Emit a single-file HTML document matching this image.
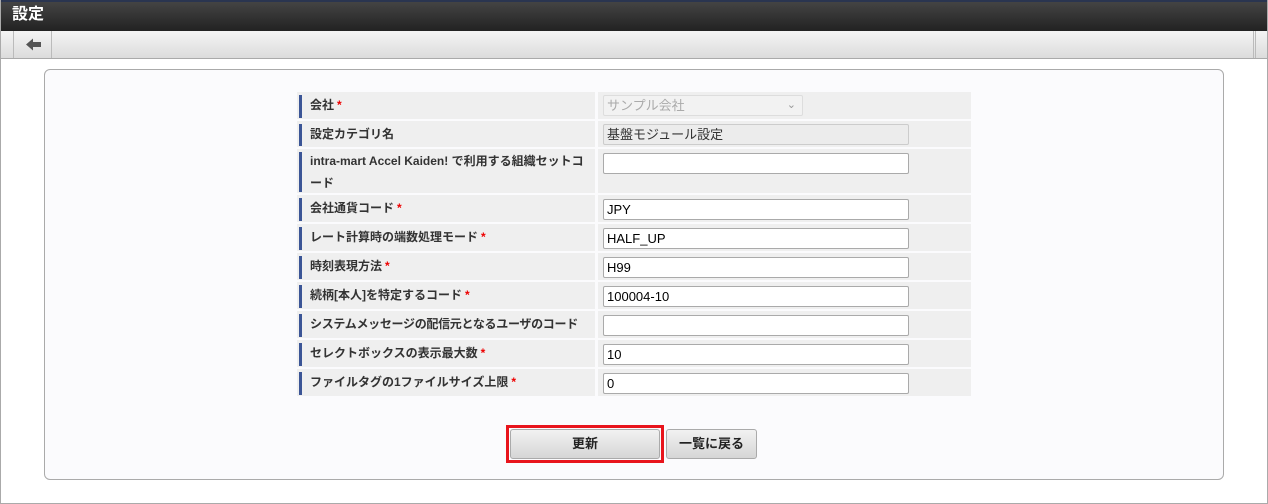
<!DOCTYPE html>
<html><head><meta charset="utf-8"><style>
*{box-sizing:border-box;margin:0;padding:0}
body{width:1268px;height:504px;background:#fff;font-family:"Liberation Sans","Noto Sans CJK JP",sans-serif;font-size:13px;color:#333;position:relative;overflow:hidden}
.frame{position:absolute;left:0;top:0;width:1268px;height:504px;border:1px solid #aaa;border-top:none}
.hdr{position:absolute;left:0;top:0;width:1268px;height:31px;background:linear-gradient(#444,#222);border-top:2px solid #2a3550}
.hdr span{position:absolute;left:12px;top:2px;color:#fff;font-weight:bold;font-size:16px;line-height:22px}
.tb{position:absolute;left:1px;top:31px;width:1266px;height:28px;background:linear-gradient(#f4f4f4,#dcdcdc);border-bottom:1px solid #aaa}
.tb .b{position:absolute;left:12px;top:0;width:39px;height:27px;border-left:1px solid #bbb;border-right:1px solid #bbb}
.tb .r{position:absolute;left:1252px;top:0;width:3px;height:27px;border-left:1px solid #bbb;border-right:1px solid #bbb}
.panel{position:absolute;left:44px;top:69px;width:1180px;height:411px;background:#fbfbfd;border:1px solid #aaa;border-radius:6px}
.lab{position:absolute;left:297px;width:298px;background:#efefef;padding-left:13px;font-size:12px;font-weight:bold;line-height:26px;color:#333;white-space:nowrap;overflow:hidden}
.lab:before{content:"";position:absolute;left:2px;top:3px;bottom:1px;width:3px;background:#3b5596}
.val{position:absolute;left:598px;width:373px;background:#efefef}
.req{color:#e00;margin-left:3px}
.inp{position:absolute;left:5px;top:4px;width:306px;height:21px;border:1px solid #aaa;border-radius:2px;background:#fff;padding-left:3px;font-size:13px;line-height:19px;color:#000}
.dis{background:#ececec;border-color:#ccc;color:#333}
.sel{width:200px;color:#aaa;border-color:#ddd;background:#f2f2f2}
.btn{position:absolute;top:429px;height:30px;border:1px solid #aaa;border-radius:3px;background:linear-gradient(#f2f2f2,#d6d6d6);text-align:center;line-height:28px;font-size:13px;font-weight:bold;color:#222}
</style></head><body>
<div class="hdr"><span>設定</span></div>
<div class="tb"><div class="b"><svg width="39" height="27" viewBox="0 0 39 27"><path d="M12 13.5 L19 7.5 V11 H27 V16 H19 V19.5 Z" fill="#555"/></svg></div><div class="r"></div></div>
<div class="frame"></div>
<div class="panel"></div>

<div class="lab" style="top:92px;height:27px">会社<span class="req">*</span></div>
<div class="val" style="top:92px;height:27px"><div class="inp sel" style="top:3px">サンプル会社<span style="position:absolute;right:6px;top:0;color:#999;font-size:11px">&#8964;</span></div></div>
<div class="lab" style="top:121px;height:26px">設定カテゴリ名</div>
<div class="val" style="top:121px;height:26px"><div class="inp dis" style="top:3px">基盤モジュール設定</div></div>
<div class="lab" style="top:149px;height:44px;line-height:22px;padding-top:1px">intra-mart Accel Kaiden! で利用する組織セットコ<br>ード</div>
<div class="val" style="top:149px;height:44px"><div class="inp"></div></div>
<div class="lab" style="top:195px;height:27px">会社通貨コード<span class="req">*</span></div>
<div class="val" style="top:195px;height:27px"><div class="inp">JPY</div></div>
<div class="lab" style="top:224px;height:27px">レート計算時の端数処理モード<span class="req">*</span></div>
<div class="val" style="top:224px;height:27px"><div class="inp">HALF_UP</div></div>
<div class="lab" style="top:253px;height:27px">時刻表現方法<span class="req">*</span></div>
<div class="val" style="top:253px;height:27px"><div class="inp">H99</div></div>
<div class="lab" style="top:282px;height:27px">続柄[本人]を特定するコード<span class="req">*</span></div>
<div class="val" style="top:282px;height:27px"><div class="inp">100004-10</div></div>
<div class="lab" style="top:311px;height:27px;letter-spacing:-0.3px">システムメッセージの配信元となるユーザのコード</div>
<div class="val" style="top:311px;height:27px"><div class="inp"></div></div>
<div class="lab" style="top:340px;height:27px">セレクトボックスの表示最大数<span class="req">*</span></div>
<div class="val" style="top:340px;height:27px"><div class="inp">10</div></div>
<div class="lab" style="top:369px;height:27px">ファイルタグの1ファイルサイズ上限<span class="req">*</span></div>
<div class="val" style="top:369px;height:27px"><div class="inp">0</div></div>

<div style="position:absolute;left:506px;top:425px;width:158px;height:38px;border:3px solid #e8141c"></div>
<div class="btn" style="left:510px;width:150px">更新</div>
<div class="btn" style="left:666px;width:91px">一覧に戻る</div>
</body></html>
